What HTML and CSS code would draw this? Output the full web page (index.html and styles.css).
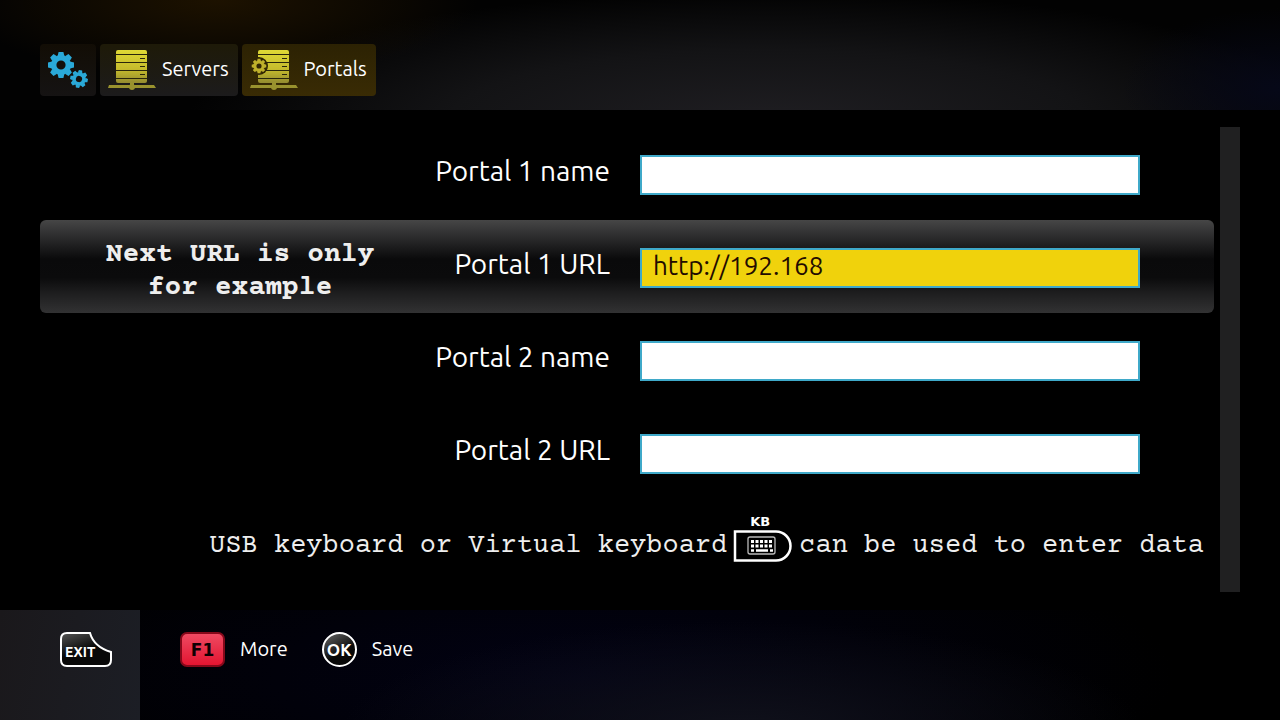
FILE: index.html
```html
<!DOCTYPE html>
<html lang="en">
<head>
    <meta charset="UTF-8">
    <meta name="viewport" content="width=device-width, initial-scale=1.0">
    <title>Portals</title>
    <link rel="stylesheet" href="styles.css">
</head>
<body>
    <!-- Shared icon parts -->
    <svg class="defs" width="0" height="0" aria-hidden="true">
        <defs>
            <linearGradient id="yellow" x1="0" y1="0" x2="0" y2="1">
                <stop offset="0" stop-color="#dfd936"/>
                <stop offset="0.6" stop-color="#c4ba2c"/>
                <stop offset="1" stop-color="#938b30"/>
            </linearGradient>
            <linearGradient id="gloss" x1="0" y1="0" x2="0.5" y2="1">
                <stop offset="0" stop-color="#555"/>
                <stop offset="0.6" stop-color="#080808"/>
            </linearGradient>
            <g id="gear">
                <circle r="7.3" fill="none" stroke="currentColor" stroke-width="5.4"/>
                <g fill="currentColor">
                    <path id="teeth" d="M-3.4 -9 L-2.4 -13 H2.4 L3.4 -9 Z M-3.4 9 L-2.4 13 H2.4 L3.4 9 Z M-9 -3.4 L-13 -2.4 V2.4 L-9 3.4 Z M9 -3.4 L13 -2.4 V2.4 L9 3.4 Z"/>
                    <use href="#teeth" transform="rotate(45)"/>
                </g>
            </g>
            <g id="rack">
                <path fill="url(#yellow)" d="M11 1 H37 Q39 1 39 3 V32 Q39 34 37 34 H10 Q8 34 8 32 V3 Q8 1 10 1 Z"/>
                <path stroke="#29260c" stroke-width="1" d="M8 5.5 H39 M8 13.5 H39 M8 21.5 H39 M8 29.5 H39 M32 9.5 H37 M32 17.5 H37 M32 25.5 H37"/>
                <path fill="#99922e" d="M1 36 H46 L48 39 H0 Z M22 33 H26 V36 H22 Z"/>
                <circle cx="24" cy="38" r="3" fill="#99922e"/>
            </g>
            <mask id="cut">
                <rect width="48" height="42" fill="#fff"/>
                <circle cx="9" cy="17" r="9" fill="#000"/>
            </mask>
        </defs>
    </svg>

    <header class="header">
        <nav class="breadcrumbs">
            <button class="crumb crumb-home" type="button" aria-label="Settings">
                <svg width="40" height="40" viewBox="0 0 40 40">
                    <use href="#gear" transform="translate(13 15)"/>
                    <use href="#gear" transform="translate(31 29) rotate(10) scale(0.68)"/>
                </svg>
            </button>
            <button class="crumb" type="button">
                <svg width="48" height="42" viewBox="0 0 48 42"><use href="#rack"/></svg>
                <span>Servers</span>
            </button>
            <button class="crumb crumb-active" type="button">
                <svg width="48" height="42" viewBox="0 0 48 42">
                    <g mask="url(#cut)"><use href="#rack"/></g>
                    <use class="rack-gear" href="#gear" transform="translate(9 17) scale(0.56)"/>
                </svg>
                <span>Portals</span>
            </button>
        </nav>
    </header>

    <main class="content">
        <form class="fields">
            <div class="row">
                <label for="name1">Portal 1 name</label>
                <input id="name1" type="text">
            </div>
            <div class="row row-active">
                <p class="hint">Next URL is only<br>for example</p>
                <label for="url1">Portal 1 URL</label>
                <input id="url1" type="text" value="http://192.168">
            </div>
            <div class="row">
                <label for="name2">Portal 2 name</label>
                <input id="name2" type="text">
            </div>
            <div class="row">
                <label for="url2">Portal 2 URL</label>
                <input id="url2" type="text">
            </div>
            <div class="note">
                <span>USB keyboard or Virtual keyboard</span>
                <span class="kb">
                    <span class="kb-text">KB</span>
                    <svg width="60" height="32" viewBox="0 0 60 32" aria-hidden="true">
                        <path fill="none" stroke="#fff" stroke-width="2.5" d="M2 1.5 H43 A14.5 14.5 0 0 1 43 30.5 H2 Z"/>
                        <rect x="15" y="7" width="27" height="17" rx="2" fill="none" stroke="#bbb" stroke-width="1.3"/>
                        <path stroke="#fff" stroke-width="3" stroke-dasharray="3 1.5" d="M18 11.5 H40 M18 16 H40"/>
                        <path stroke="#fff" stroke-width="2.5" d="M18 20.5 H21 M23 20.5 H35 M37 20.5 H40"/>
                    </svg>
                </span>
                <span>can be used to enter data</span>
            </div>
        </form>
        <div class="scrollbar"></div>
    </main>

    <footer class="footer">
        <div class="exit">
            <button class="action" type="button">
                <svg width="52" height="36" viewBox="0 0 52 36">
                    <path fill="url(#gloss)" stroke="#fff" stroke-width="2" d="M7 1 H30 Q34 15 51 20 V28 Q51 34 45 34 H7 Q1 34 1 28 V7 Q1 1 7 1 Z"/>
                    <text class="exit-text" x="5" y="25">EXIT</text>
                </svg>
            </button>
        </div>
        <div class="actions">
            <button class="action" type="button">
                <span class="key-f1">F1</span>
                <span class="action-label">More</span>
            </button>
            <button class="action" type="button">
                <span class="key-ok">OK</span>
                <span class="action-label">Save</span>
            </button>
        </div>
    </footer>
</body>
</html>
```
FILE: styles.css
```css
* {
    box-sizing: border-box;
}
body {
    display: flex;
    flex-direction: column;
    min-height: 100vh;
    margin: 0;
    background-color: #000;
    color: #fff;
    font-family: Ubuntu, "Noto Sans", sans-serif;
    font-size: 20px;
}
button {
    border: 0;
    padding: 0;
    background: none;
    color: inherit;
    font: inherit;
}
svg {
    display: block;
    flex: none;
}
.defs {
    position: absolute;
}

/* Header */
.header {
    height: 110px;
    padding: 44px 40px 0;
    background:
        radial-gradient(ellipse 260px 80px at 17% 0, #1d1200, transparent),
        radial-gradient(ellipse 160px 80px at 100% 80%, #060818, transparent),
        radial-gradient(ellipse 580px 130px at 60% 110%, #1f1e22, #131315 55%, transparent),
        #020202;
}
.breadcrumbs {
    display: flex;
    gap: 4px;
}
.crumb {
    display: flex;
    align-items: center;
    gap: 6px;
    height: 52px;
    padding: 0 9px 0 8px;
    border-radius: 4px;
    background: linear-gradient(#1e1a08, #1c1b1c);
}
.crumb span {
    padding-bottom: 4px;
}
.crumb-home {
    padding: 0 8px;
    background: linear-gradient(#120d05, #151313);
    color: #2aa9d8;
}
.crumb-active {
    background: linear-gradient(#2c2203, #392b04);
}
.rack-gear {
    color: #bfb02b;
}

/* Portal form */
.content {
    display: flex;
    flex: 1;
    gap: 6px;
    padding: 17px 40px 18px;
}
.fields {
    flex: 1;
}
.row {
    display: grid;
    grid-template-columns: 380px 190px 1fr;
    align-items: center;
    height: 93px;
    padding-right: 74px;
    border-radius: 6px;
    font-size: 28px;
}
.row-active {
    background: linear-gradient(#464646 0%, #2c2c2d 18%, #0a0a0b 42%, #0b0b0c 62%, #1d1d1e 78%, #323233 100%);
}
.row label {
    grid-column: 2;
    padding-bottom: 6px;
    text-align: right;
    white-space: nowrap;
}
.row input {
    grid-column: 3;
    min-width: 0;
    height: 40px;
    margin: 3px 0 0 30px;
    padding: 0 11px 5px;
    border: 2px solid #3fa9c9;
    border-radius: 0;
    background-color: #fff;
    color: #230b00;
    font: inherit;
    font-size: 26px;
}
.row-active input {
    background-color: #f0d20c;
}
.hint {
    margin: 0;
    padding: 10px 0 0 20px;
    color: #eee;
    font-family: "Courier Prime", "Liberation Mono", monospace;
    font-size: 28px;
    font-weight: bold;
    line-height: 33px;
    text-align: center;
    white-space: nowrap;
}
.note {
    display: flex;
    align-items: center;
    justify-content: flex-end;
    gap: 6px;
    height: 93px;
    padding-right: 10px;
    color: #eee;
    font-family: "Courier Prime", "Liberation Mono", monospace;
    font-size: 27px;
    white-space: nowrap;
}
.kb {
    display: flex;
    flex-direction: column;
    padding-bottom: 16px;
}
.kb-text {
    width: 54px;
    color: #fff;
    font: bold 13px/16px "DejaVu Sans", sans-serif;
    text-align: center;
}
.scrollbar {
    width: 20px;
    background-color: #202021;
}

/* Footer */
.footer {
    display: flex;
    height: 110px;
    background:
        radial-gradient(ellipse 400px 110px at 58% 110%, #10111b, transparent),
        radial-gradient(ellipse 600px 160px at 45% 60%, #020214, transparent),
        #000;
}
.exit {
    width: 140px;
    padding: 22px 0 0 60px;
    background: linear-gradient(100deg, #1a181b, #1c1e25);
}
.exit-text {
    fill: #fff;
    font: bold 14px Ubuntu, "Open Sans", sans-serif;
}
.actions {
    display: flex;
    align-items: flex-start;
    gap: 34px;
    padding: 22px 40px 0;
}
.action {
    display: flex;
    align-items: center;
    gap: 15px;
}
.action-label {
    padding-bottom: 2px;
}
.key-f1 {
    display: grid;
    place-items: center;
    width: 45px;
    height: 35px;
    border: 2px solid #85081a;
    border-radius: 7px;
    background: linear-gradient(#ef4a62, #e31531);
    color: #100003;
    font: bold 17px "DejaVu Sans", sans-serif;
}
.key-ok {
    display: grid;
    place-items: center;
    width: 35px;
    height: 35px;
    border: 2px solid #fff;
    border-radius: 50%;
    background: linear-gradient(150deg, #666, #080808 60%);
    font: bold 17px Ubuntu, "Noto Sans", sans-serif;
}
```
